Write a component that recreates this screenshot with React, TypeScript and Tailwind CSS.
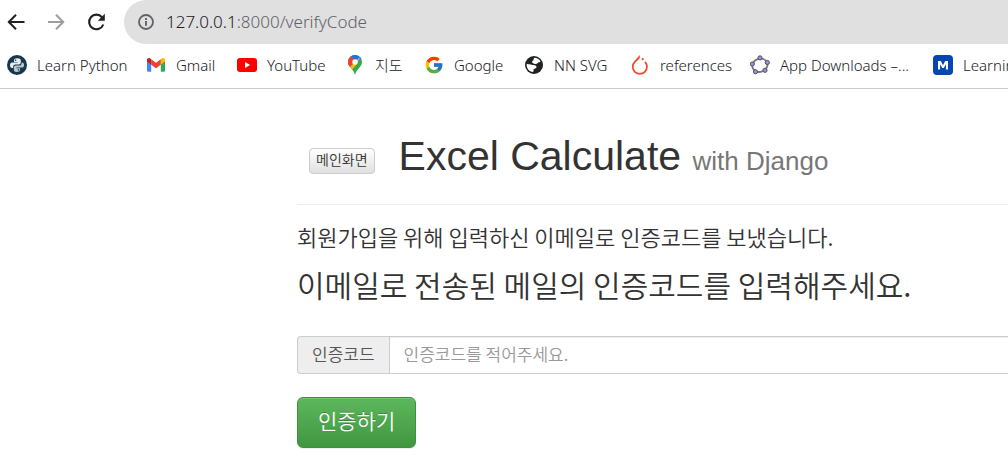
import React from "react";
import { FcGoogle } from "react-icons/fc";

const icon = "size-5 shrink-0";

function PythonIcon() {
  return (
    <svg className={icon} viewBox="0 0 20 20" aria-hidden="true">
      <circle cx="10" cy="10" r="10" fill="#16384f" />
      <path d="M10.4 3.2c-2.6 0-3.4.9-3.4 2.2v1.5h3.6v.7H5.2C3.7 7.6 3 8.900 3 10.300c0 1.600.8 2.700 2 2.700h1.200v-1.500c0-1.300 1-2.100 2.200-2.100h3.500c1.100 0 1.900-.8 1.900-1.900V5.400c0-1.400-1.200-2.200-3.400-2.200z" fill="#e9eef2" />
      <path d="M9.700 17c2.600 0 3.400-.9 3.400-2.200v-1.500H9.500v-.7h5.400c1.500 0 2.200-1.300 2.200-2.700 0-1.600-.8-2.500-2-2.500h-.4c0 2-.9 3.100-2.400 3.100H8.800c-1.100 0-1.900.8-1.900 1.900v2.400c0 1.400 1 2.200 2.800 2.200z" fill="#b9c6cf" />
      <circle cx="8.600" cy="5.200" r=".8" fill="#16384f" />
      <circle cx="11.500" cy="15" r=".8" fill="#16384f" />
    </svg>
  );
}

function GmailIcon() {
  return (
    <svg className={icon} viewBox="0 0 20 20" aria-hidden="true">
      <path d="M1 5.500V15.500c0 .8.500 1.200 1.200 1.200H5.200V8.500z" fill="#4285f4" />
      <path d="M19 5.500V15.500c0 .8-.5 1.200-1.200 1.200H14.800V8.500z" fill="#34a853" />
      <path d="M14.800 4.200V9.700L19 6.500V5c0-1.800-1.900-2.500-3.200-1.500z" fill="#fbbc04" />
      <path d="M5.200 9.700V4.200L10 7.800l4.800-3.600v5.500L10 13.300z" fill="#ea4335" />
      <path d="M1 5v1.500l4.200 3.200V4.200l-1-.7C2.900 2.500 1 3.200 1 5z" fill="#c5221f" />
    </svg>
  );
}

function YouTubeIcon() {
  return (
    <svg className={icon} viewBox="0 0 20 20" aria-hidden="true">
      <rect x="0" y="3" width="20" height="14" rx="3" fill="#f00" />
      <path d="M8 7l5.200 3L8 13z" fill="#fff" />
    </svg>
  );
}

function MapsIcon() {
  return (
    <svg className={icon} viewBox="0 0 20 20" aria-hidden="true">
      <defs>
        <clipPath id="pin">
          <path d="M10 0a7 7 0 0 0-7 7c0 5.300 5.500 6.500 7 13 1.500-6.500 7-7.700 7-13a7 7 0 0 0-7-7z" />
        </clipPath>
      </defs>
      <g clipPath="url(#pin)">
        <path d="M0 0h20v20H0z" fill="#34a853" />
        <path d="M4.500 2.300L10 7 2 15V2z" fill="#ea4335" />
        <path d="M3 0h14v3.300L10 9z" fill="#1a73e8" />
        <path d="M10 7L17 0v5z" fill="#4285f4" />
        <path d="M0 0h4.700L10 5 3 12.500z" fill="#ea4335" />
        <path d="M4.500 12.500L15 2 12 9l-6 7z" fill="#fbbc04" />
      </g>
      <circle cx="10" cy="7" r="2.700" fill="#fff" />
    </svg>
  );
}

function GlobeIcon() {
  return (
    <svg className={icon} viewBox="0 0 20 20" aria-hidden="true">
      <circle cx="10" cy="10" r="9" fill="#202124" />
      <path d="M2.700 8.800c2 .9 3.300.4 5.200.9 1.700.4 4.600.4 4.600 2.200 0 1.700-2.600 1.300-2.900 2.700-.1 1 .1 1.500-.5 2.400C5 16.900 2.200 13 2.700 8.800z" fill="#fff" />
      <path d="M10.500 2.800c2.500.1 4.900 1.300 6 3.600-.5 1-1.500.6-2.300 1-.9.5-1.100 1.400-2.300 1.500-1.600.1-3.600-.5-3.900-1.900-.2-1.100 1.200-1.200 1.500-2.100.2-.8.100-1.700 1-2.100z" fill="#fff" />
    </svg>
  );
}

function TorchIcon() {
  return (
    <svg className={icon} viewBox="0 0 20 20" aria-hidden="true">
      <path d="M9.800 0v3.200L5.400 7.500a6.200 6.200 0 1 0 8.900 0l1.300-1.300a8 8 0 1 1-11.500 0z" fill="#ee4c2c" />
      <circle cx="12.700" cy="4.200" r="1.100" fill="#ee4c2c" />
    </svg>
  );
}

function GeoGebraIcon() {
  const dots = [[10, 2.900], [17.300, 7.500], [15, 15.300], [5.500, 16.800], [2.300, 9]];
  return (
    <svg className={icon} viewBox="0 0 20 20" aria-hidden="true">
      <ellipse cx="9.800" cy="10.200" rx="7.700" ry="6.600" transform="rotate(-20 10 10)" fill="none" stroke="#777" strokeWidth="1.800" />
      {dots.map(([x, y]) => (
        <circle key={x} cx={x} cy={y} r="2.100" fill="#8f8fee" stroke="#555" strokeWidth="1" />
      ))}
    </svg>
  );
}

function MIcon() {
  return (
    <span className="flex size-5 shrink-0 items-center justify-center rounded bg-[#0646b4]">
      <svg className="size-3" viewBox="0 0 12 12" aria-hidden="true">
        <path d="M1 10.500V2h2.800L6 6.200 8.200 2H11v8.500H8.900V5.300L6.800 9H5.200L3.100 5.300v5.200z" fill="#fff" />
      </svg>
    </span>
  );
}

const bookmarks = [
  { label: "Learn Python", mark: <PythonIcon /> },
  { label: "Gmail", mark: <GmailIcon /> },
  { label: "YouTube", mark: <YouTubeIcon /> },
  { label: "지도", mark: <MapsIcon /> },
  { label: "Google", mark: <FcGoogle className={icon} /> },
  { label: "NN SVG", mark: <GlobeIcon /> },
  { label: "references", mark: <TorchIcon /> },
  { label: "App Downloads –...", mark: <GeoGebraIcon /> },
  { label: "Learning", mark: <MIcon /> },
];

function BrowserBar() {
  return (
    <header className="border-b border-[#c8cacc] font-['Noto_Sans','Noto_Sans_CJK_KR',sans-serif] font-light text-[#202124]">
      <div className="flex h-11 items-center pl-1.5">
        <button type="button" aria-label="Back" className="mr-5">
          <svg className="size-5" viewBox="0 0 20 20" fill="none" stroke="#202124" strokeWidth="2">
            <path d="M18.500 10H3M10 2.800L2.800 10l7.200 7.200" />
          </svg>
        </button>
        <button type="button" aria-label="Forward" className="mr-5">
          <svg className="size-5" viewBox="0 0 20 20" fill="none" stroke="#9b9da0" strokeWidth="2">
            <path d="M2 10h15M10 2.800l7.200 7.200-7.200 7.200" />
          </svg>
        </button>
        <button type="button" aria-label="Reload" className="mr-[18px]">
          <svg className="size-5" viewBox="0 0 20 20">
            <path d="M17.300 12.500A7.300 7.300 0 1 1 16 5.200" fill="none" stroke="#202124" strokeWidth="2.100" />
            <path d="M18.800 1.800v7h-7z" fill="#202124" />
          </svg>
        </button>
        <div className="flex h-11 flex-1 items-center gap-3 rounded-l-full bg-[#e0e0e0] pl-3.5">
          <svg className="size-4" viewBox="0 0 16 16" aria-hidden="true">
            <circle cx="8" cy="8" r="7" fill="none" stroke="#5f6368" strokeWidth="1.800" />
            <path d="M8 7v4.800M8 4v2" stroke="#5f6368" strokeWidth="1.900" />
          </svg>
          <span className="text-[17px]">
            127.0.0.1<span className="text-[#5f6368]">:8000/verifyCode</span>
          </span>
        </div>
      </div>
      <nav className="grid h-11 grid-cols-[139px_91px_108px_79px_100px_106px_120px_183px_1fr] items-center overflow-hidden pb-0.5 pl-[7px] text-[15px]">
        {bookmarks.map((b) => (
          <a key={b.label} href="#" className="flex items-center gap-2.5 whitespace-nowrap">
            {b.mark}
            {b.label}
          </a>
        ))}
      </nav>
    </header>
  );
}

export default function App() {
  return (
    <div className="min-h-screen overflow-x-hidden bg-white">
      <BrowserBar />
      <main className="ml-[297px] pt-10 font-['Liberation_Sans','Noto_Sans_CJK_KR',sans-serif] text-[#333]">
        <div className="flex items-center border-b border-[#eee] pb-4 pl-3">
          <button
            type="button"
            className="mt-1 mr-6 flex h-[26px] items-start rounded border border-[#ccc] bg-linear-to-b from-white to-[#e0e0e0] px-1.5 font-['Noto_Sans_CJK_KR',sans-serif] text-sm leading-5 font-[350]"
          >
            메인화면
          </button>
          <h1 className="text-[41px] leading-[54px]">
            Excel Calculate <small className="text-[26px] text-[#777]">with Django</small>
          </h1>
        </div>
        <p className="mt-[15px] font-['Noto_Sans_CJK_KR',sans-serif] text-[22px] leading-8 font-[350]">
          회원가입을 위해 입력하신 이메일로 인증코드를 보냈습니다.
        </p>
        <h2 className="mt-3 font-['Noto_Sans_CJK_KR',sans-serif] text-[30px] leading-10 font-[350]">
          이메일로 전송된 메일의 인증코드를 입력해주세요.
        </h2>
        <form className="mt-8 font-['Noto_Sans_CJK_KR',sans-serif] font-[350]">
          <div className="flex h-[38px]">
            <label
              htmlFor="code"
              className="flex items-center rounded-l border border-r-0 border-[#ccc] bg-[#eee] px-3.5 pb-0.5 text-[17px] text-[#555]"
            >
              인증코드
            </label>
            <input
              id="code"
              type="text"
              placeholder="인증코드를 적어주세요."
              className="min-w-0 flex-1 border border-r-0 border-[#ccc] px-3.5 pb-0.5 text-[17px] shadow-[inset_0_1px_1px_rgba(0,0,0,0.075)] placeholder:text-[#999]"
            />
          </div>
          <button
            type="button"
            className="mt-[23px] h-[51px] rounded-md border border-[#3e8f3e] bg-linear-to-b from-[#5cb85c] to-[#419641] px-5 pb-1 text-[21px] text-white shadow-[inset_0_1px_0_rgba(255,255,255,0.15),0_1px_1px_rgba(0,0,0,0.075)] [text-shadow:0_-1px_0_rgba(0,0,0,0.2)]"
          >
            인증하기
          </button>
        </form>
      </main>
    </div>
  );
}
